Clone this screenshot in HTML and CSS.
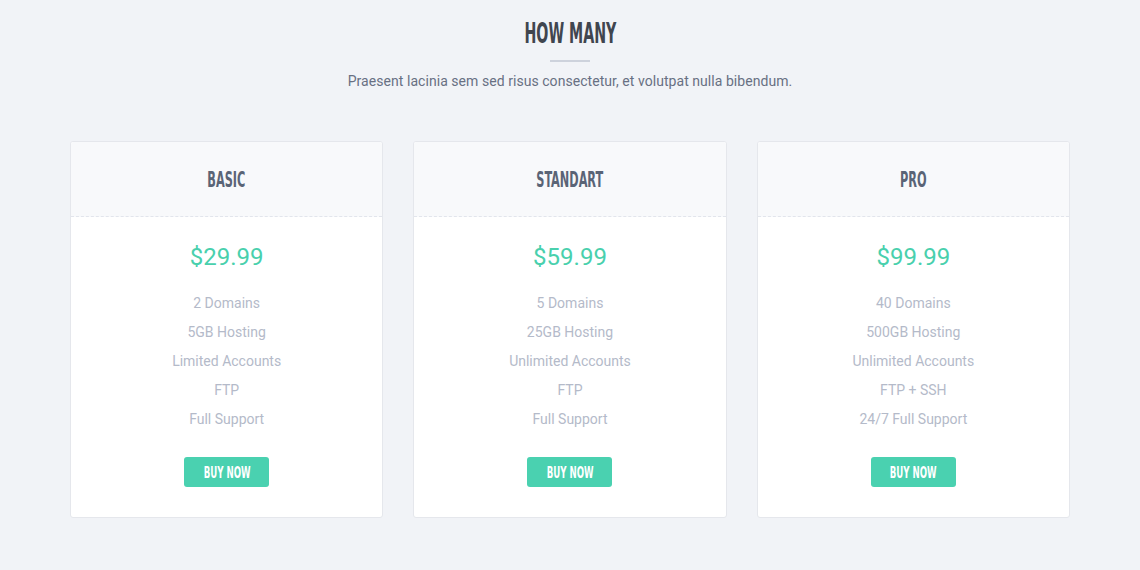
FILE: index.html
```html
<!DOCTYPE html>
<html lang="en">
<head>
<meta charset="utf-8">
<title>How Many</title>
<link rel="stylesheet" href="styles.css">
</head>
<body>
<section class="pricing">
  <h2 class="pricing-title"><span class="condensed">HOW MANY</span></h2>
  <div class="divider"></div>
  <p class="pricing-sub">Praesent lacinia sem sed risus consectetur, et volutpat nulla bibendum.</p>
  <div class="plans">
    <div class="plan">
      <div class="plan-head"><span class="plan-name condensed">BASIC</span></div>
      <div class="plan-body">
        <div class="price">$29.99</div>
        <ul class="features">
          <li>2 Domains</li>
          <li>5GB Hosting</li>
          <li>Limited Accounts</li>
          <li>FTP</li>
          <li>Full Support</li>
        </ul>
        <a class="buy" href="#"><span class="condensed">BUY NOW</span></a>
      </div>
    </div>
    <div class="plan">
      <div class="plan-head"><span class="plan-name condensed">STANDART</span></div>
      <div class="plan-body">
        <div class="price">$59.99</div>
        <ul class="features">
          <li>5 Domains</li>
          <li>25GB Hosting</li>
          <li>Unlimited Accounts</li>
          <li>FTP</li>
          <li>Full Support</li>
        </ul>
        <a class="buy" href="#"><span class="condensed">BUY NOW</span></a>
      </div>
    </div>
    <div class="plan">
      <div class="plan-head"><span class="plan-name condensed">PRO</span></div>
      <div class="plan-body">
        <div class="price">$99.99</div>
        <ul class="features">
          <li>40 Domains</li>
          <li>500GB Hosting</li>
          <li>Unlimited Accounts</li>
          <li>FTP + SSH</li>
          <li>24/7 Full Support</li>
        </ul>
        <a class="buy" href="#"><span class="condensed">BUY NOW</span></a>
      </div>
    </div>
  </div>
</section>
</body>
</html>
```

FILE: styles.css
```css
html, body {
  margin: 0;
  padding: 0;
}
body {
  background: #f1f3f7;
  font-family: Roboto, "Liberation Sans", sans-serif;
  width: 1140px;
  height: 570px;
  overflow: hidden;
}
.pricing {
  display: flex;
  flex-direction: column;
  align-items: center;
  padding-top: 15px;
}
.condensed {
  display: inline-block;
  font-family: "Liberation Sans Narrow", "DejaVu Sans Condensed", "Liberation Sans", sans-serif;
  font-weight: bold;
}
.pricing-title {
  margin: 0;
  font-size: 29px;
  line-height: 36px;
  color: #40454f;
  font-weight: bold;
}
.pricing-title .condensed {
  transform: scaleX(0.545);
}
.divider {
  width: 40px;
  height: 2px;
  background: #cdd2dc;
  margin-top: 9px;
}
.pricing-sub {
  margin: 9px 0 0;
  font-size: 14px;
  line-height: 20px;
  letter-spacing: 0.05px;
  color: #687083;
}
.plans {
  margin-top: 50px;
  width: 1000px;
  display: grid;
  grid-template-columns: repeat(3, 1fr);
  gap: 30px;
}
.plan {
  background: #fff;
  border: 1px solid #e5e7ec;
  border-radius: 3px;
  overflow: hidden;
}
.plan-head {
  height: 74px;
  background: #f8f9fb;
  border-bottom: 1px dashed #e2e5ec;
  display: flex;
  align-items: center;
  justify-content: center;
}
.plan-name {
  font-size: 22px;
  color: #5a6476;
  transform: scaleX(0.57);
}
.plan-body {
  display: flex;
  flex-direction: column;
  align-items: center;
  padding: 25px 0 30px;
}
.price {
  font-size: 24px;
  line-height: 30px;
  color: #49d0ad;
}
.features {
  list-style: none;
  margin: 17px 0 0;
  padding: 0;
  text-align: center;
}
.features li {
  font-size: 14px;
  line-height: 29px;
  color: #b4bac9;
}
.buy {
  margin-top: 23px;
  width: 85px;
  height: 30px;
  border-radius: 3px;
  background: #4ad1b0;
  display: flex;
  align-items: center;
  justify-content: center;
  text-decoration: none;
  color: #fff;
}
.buy .condensed {
  font-size: 16px;
  transform: scaleX(0.6);
}
```
